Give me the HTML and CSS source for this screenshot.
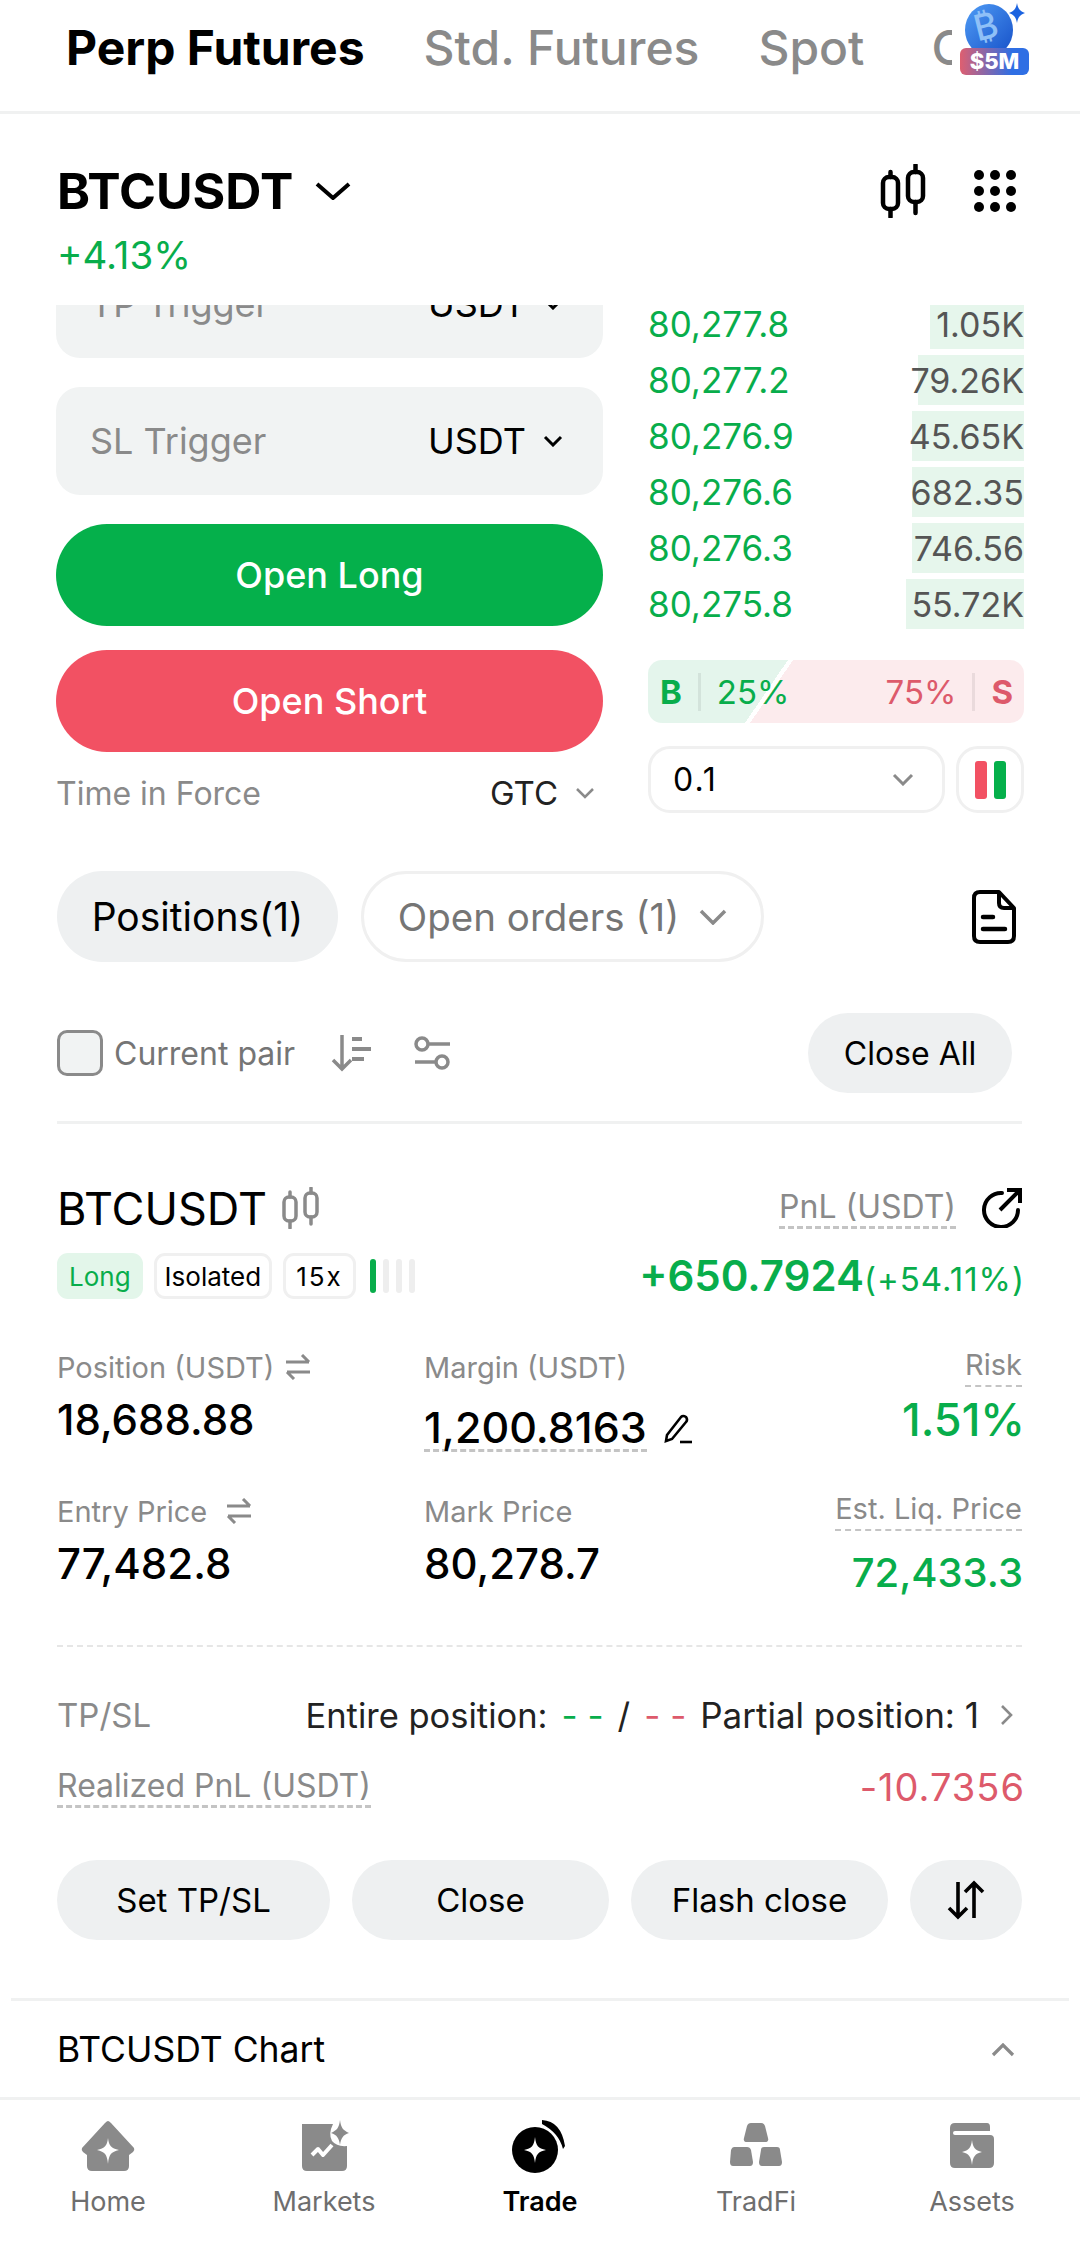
FILE: index.html
```html
<!DOCTYPE html>
<html lang="en">
  <head>
    <meta charset="UTF-8" />
    <meta name="viewport" content="width=device-width, initial-scale=1.0" />
    <title>Trade</title>
    <link rel="stylesheet" href="styles.css">
  </head>
  <body>
    <div class="app">
      <div class="tabs">
        <div class="tabs-list">
          <span class="tab active">Perp Futures</span>
          <span class="tab">Std. Futures</span>
          <span class="tab">Spot</span>
          <span class="tab tab-cut">Copy</span>
        </div>
        <div class="promo">
          <svg class="promo-coin" width="72" height="50" viewBox="0 0 72 50">
            <defs>
              <linearGradient id="coin" x1="0" y1="0" x2="1" y2="1">
                <stop offset="0" stop-color="#4f9cf5" />
                <stop offset="1" stop-color="#1650c8" />
              </linearGradient>
            </defs>
            <ellipse cx="31" cy="30" rx="24" ry="26" fill="url(#coin)" />
            <path d="M59 3 C60 9 62 11 67 13 C62 15 60 17 59 23 C58 17 56 15 51 13 C56 11 58 9 59 3 Z" fill="#1c63e0" />
          </svg>
          <span class="promo-btc">₿</span>
          <span class="promo-label">$5M</span>
        </div>
      </div>

      <div class="symbol">
        <div class="symbol-top">
          <span class="symbol-name">BTCUSDT</span>
          <svg class="symbol-caret" width="36" height="18" viewBox="0 0 36 18"><path d="M2 2 L18 16 L34 2" fill="none" stroke="#000" stroke-width="4" /></svg>
          <svg class="symbol-chart" width="46" height="54" viewBox="0 0 46 54">
            <rect x="3" y="13" width="15" height="32" rx="6" fill="none" stroke="#000" stroke-width="4.5" />
            <rect x="28" y="8" width="15" height="30" rx="6" fill="none" stroke="#000" stroke-width="4.5" />
            <path d="M10.5 8 V13 M10.5 45 V53 M35.5 1 V8 M35.5 38 V49" stroke="#000" stroke-width="4.5" stroke-linecap="round" />
          </svg>
          <svg class="symbol-grid" width="44" height="44" viewBox="0 0 44 44" fill="#000">
            <circle cx="6" cy="6" r="5" /><circle cx="22" cy="6" r="5" /><circle cx="38" cy="6" r="5" />
            <circle cx="6" cy="22" r="5" /><circle cx="22" cy="22" r="5" /><circle cx="38" cy="22" r="5" />
            <circle cx="6" cy="38" r="5" /><circle cx="22" cy="38" r="5" /><circle cx="38" cy="38" r="5" />
          </svg>
        </div>
        <div class="symbol-change">+4.13%</div>
      </div>

      <div class="scroll">
        <div class="trade">
          <div class="form">
            <div class="field field-clipped">
              <span class="field-label">TP Trigger</span>
              <span class="field-unit">USDT <svg width="20" height="12" viewBox="0 0 20 12"><path d="M2 2 L10 10 L18 2" fill="none" stroke="#000" stroke-width="3" /></svg></span>
            </div>
            <div class="field">
              <span class="field-label">SL Trigger</span>
              <span class="field-unit">USDT <svg width="20" height="12" viewBox="0 0 20 12"><path d="M2 2 L10 10 L18 2" fill="none" stroke="#000" stroke-width="3" /></svg></span>
            </div>
            <div class="btn-open long">Open Long</div>
            <div class="btn-open short">Open Short</div>
            <div class="tif">
              <span class="tif-label">Time in Force</span>
              <span class="tif-value">GTC <svg width="20" height="12" viewBox="0 0 20 12"><path d="M2 2 L10 10 L18 2" fill="none" stroke="#8a8a8a" stroke-width="2.5" /></svg></span>
            </div>
          </div>

          <div class="book">
            <div class="book-rows">
              <div class="book-row"><span class="price">80,277.8</span><span class="size" style="width: 94px">1.05K</span></div>
              <div class="book-row"><span class="price">80,277.2</span><span class="size" style="width: 106px">79.26K</span></div>
              <div class="book-row"><span class="price">80,276.9</span><span class="size" style="width: 112px">45.65K</span></div>
              <div class="book-row"><span class="price">80,276.6</span><span class="size" style="width: 112px">682.35</span></div>
              <div class="book-row"><span class="price">80,276.3</span><span class="size" style="width: 112px">746.56</span></div>
              <div class="book-row"><span class="price">80,275.8</span><span class="size" style="width: 118px">55.72K</span></div>
            </div>
            <div class="ratio">
              <b class="green">B</b><i class="ratio-sep"></i><span class="green">25%</span>
              <span class="red ratio-sell">75%</span><i class="ratio-sep"></i><b class="red">S</b>
            </div>
            <div class="book-tools">
              <div class="depth">
                <span>0.1</span>
                <svg width="22" height="13" viewBox="0 0 22 13"><path d="M2 2 L11 11 L20 2" fill="none" stroke="#8a8a8a" stroke-width="3" /></svg>
              </div>
              <div class="layout-btn"><i class="bar-red"></i><i class="bar-green"></i></div>
            </div>
          </div>
        </div>

        <div class="pos-tabs">
          <span class="pill pill-active">Positions(1)</span>
          <span class="pill pill-line">Open orders (1)
            <svg width="28" height="16" viewBox="0 0 28 16"><path d="M2 2 L14 14 L26 2" fill="none" stroke="#8a8a8a" stroke-width="3.5" /></svg>
          </span>
          <svg class="doc-icon" width="44" height="54" viewBox="0 0 44 54">
            <path d="M8 2 H27 L42 18 V46 Q42 52 36 52 H8 Q2 52 2 46 V8 Q2 2 8 2 Z M27 2 V13 Q27 18 32 18 H42" fill="none" stroke="#000" stroke-width="4" stroke-linejoin="round" />
            <path d="M11 27 H21 M11 39 H33" stroke="#000" stroke-width="4.5" stroke-linecap="round" />
          </svg>
        </div>

        <div class="filters">
          <i class="check"></i>
          <span class="check-label">Current pair</span>
          <svg class="sort-icon" width="42" height="38" viewBox="0 0 42 38">
            <path d="M11 1 V35 M2 26 L11 35 L20 26" fill="none" stroke="#8a8a8a" stroke-width="3.5" />
            <path d="M21 5 H31 M21 15 H40 M21 25 H33" stroke="#8a8a8a" stroke-width="4" />
          </svg>
          <svg class="slider-icon" width="36" height="34" viewBox="0 0 36 34">
            <circle cx="8" cy="8" r="6" fill="none" stroke="#8a8a8a" stroke-width="3.5" />
            <circle cx="28" cy="26" r="6" fill="none" stroke="#8a8a8a" stroke-width="3.5" />
            <path d="M14 8 H36 M1 26 H22" stroke="#8a8a8a" stroke-width="3.5" />
          </svg>
          <span class="close-all">Close All</span>
        </div>

        <div class="card">
          <div class="card-head">
            <div class="card-left">
              <div class="card-title">
                <span>BTCUSDT</span>
                <svg width="37" height="42" viewBox="0 0 37 42">
                  <rect x="2" y="10" width="12" height="24" rx="5" fill="none" stroke="#8a8a8a" stroke-width="3.5" />
                  <rect x="23" y="6" width="12" height="24" rx="5" fill="none" stroke="#8a8a8a" stroke-width="3.5" />
                  <path d="M8 5 V10 M8 34 V41 M29 1 V6 M29 30 V37" stroke="#8a8a8a" stroke-width="3.5" stroke-linecap="round" />
                </svg>
              </div>
              <div class="tags">
                <span class="tag tag-long">Long</span>
                <span class="tag tag-margin">Isolated</span>
                <span class="tag tag-lev">15x</span>
                <span class="lev"><i class="on"></i><i></i><i></i><i></i></span>
              </div>
            </div>
            <div class="card-right">
              <div class="pnl-head">
                <span class="dashed">PnL (USDT)</span>
                <svg width="40" height="40" viewBox="0 0 40 40">
                  <path d="M20 5 A17 17 0 1 0 36 22" fill="none" stroke="#000" stroke-width="4" stroke-linecap="round" />
                  <path d="M18 22 L37 3 M25 2 H38 V15" fill="none" stroke="#000" stroke-width="4" />
                </svg>
              </div>
              <div class="pnl-value"><span class="pnl-main">+650.7924</span><span class="pnl-pct">(+54.11%)</span></div>
            </div>
          </div>

          <div class="stats">
            <div class="stat">
              <div class="stat-label">Position (USDT)
                <svg width="28" height="26" viewBox="0 0 28 26"><path d="M2 8 H25 M18 1 L25 8 M26 18 H3 M10 25 L3 18" fill="none" stroke="#8a8a8a" stroke-width="3" /></svg>
              </div>
              <div class="stat-value">18,688.88</div>
            </div>
            <div class="stat">
              <div class="stat-label">Margin (USDT)</div>
              <div class="stat-value margin"><span class="dashed">1,200.8163</span>
                <svg width="30" height="30" viewBox="0 0 30 30"><path d="M4 21 L18 3 Q20 1 23 3 Q25 6 23 8 L9 25 L3 27 Z" fill="none" stroke="#000" stroke-width="2.6" /><path d="M17 28 H29" stroke="#000" stroke-width="2.6" /></svg>
              </div>
            </div>
            <div class="stat stat-end">
              <div class="stat-label"><span class="dashed-thin">Risk</span></div>
              <div class="stat-value green risk">1.51%</div>
            </div>
            <div class="stat">
              <div class="stat-label">Entry Price
                <svg class="swap-gap" width="28" height="26" viewBox="0 0 28 26"><path d="M2 8 H25 M18 1 L25 8 M26 18 H3 M10 25 L3 18" fill="none" stroke="#8a8a8a" stroke-width="3" /></svg>
              </div>
              <div class="stat-value">77,482.8</div>
            </div>
            <div class="stat">
              <div class="stat-label">Mark Price</div>
              <div class="stat-value">80,278.7</div>
            </div>
            <div class="stat stat-end">
              <div class="stat-label"><span class="dashed-thin">Est. Liq. Price</span></div>
              <div class="stat-value green liq">72,433.3</div>
            </div>
          </div>

          <div class="rule-dashed"></div>

          <div class="line tpsl">
            <span class="line-label">TP/SL</span>
            <span class="tpsl-value">
              <span class="tpsl-entire">Entire position:</span>
              <em class="green">- -</em>
              <span>/</span>
              <em class="red">- -</em>
              <span>Partial position: 1</span>
              <svg width="14" height="22" viewBox="0 0 14 22"><path d="M2 2 L11 11 L2 20" fill="none" stroke="#8a8a8a" stroke-width="2.6" /></svg>
            </span>
          </div>
          <div class="line realized">
            <span class="line-label dashed">Realized PnL (USDT)</span>
            <span class="red realized-value">-10.7356</span>
          </div>

          <div class="actions">
            <span class="action a-tpsl">Set TP/SL</span>
            <span class="action a-close">Close</span>
            <span class="action a-flash">Flash close</span>
            <span class="action a-rev">
              <svg width="38" height="40" viewBox="0 0 38 40"><path d="M11 2 V37 M2 28 L11 37 L20 28 M27 38 V3 M18 12 L27 3 L36 12" fill="none" stroke="#000" stroke-width="3.6" /></svg>
            </span>
          </div>
        </div>

        <div class="chart-row">
          <span>BTCUSDT Chart</span>
          <svg width="24" height="14" viewBox="0 0 24 14"><path d="M2 12 L12 2 L22 12" fill="none" stroke="#8a8a8a" stroke-width="3.2" /></svg>
        </div>
      </div>

      <div class="nav">
        <div class="nav-item">
          <svg width="56" height="52" viewBox="0 0 56 52">
            <path d="M28 1 Q29 1 31 3 L54 28 Q55 30 53 32 L49 35 V46 Q49 51 44 51 H12 Q7 51 7 46 V35 L3 32 Q1 30 2 28 L25 3 Q27 1 28 1 Z" fill="#8a8a8a" />
            <path d="M28 18 C29 26 31 28 39 30 C31 32 29 34 28 44 C27 34 25 32 17 30 C25 28 27 26 28 18 Z" fill="#fff" />
          </svg>
          <span>Home</span>
        </div>
        <div class="nav-item">
          <svg class="nav-markets" width="56" height="52" viewBox="0 0 56 52">
            <path d="M7 4 H38 Q33 14 37 21 Q42 27 52 26 V46 Q52 51 47 51 H12 Q7 51 7 46 Z" fill="#8a8a8a" />
            <path d="M45 0 C46 8 48 10 54 13 C48 15 46 18 45 25 C44 18 42 15 36 13 C42 10 44 8 45 0 Z" fill="#8a8a8a" />
            <path d="M17 35 L23 29 L28 35 L37 25" fill="none" stroke="#fff" stroke-width="4" stroke-linejoin="round" />
          </svg>
          <span>Markets</span>
        </div>
        <div class="nav-item nav-active">
          <svg width="56" height="54" viewBox="0 0 56 54">
            <circle cx="23" cy="31" r="23" fill="#000" />
            <path d="M30 1 Q49 2 53 27 L51 30 Q47 14 30 5 Z" fill="#000" />
            <path d="M23 18 C24 27 26 29 34 31 C26 33 24 35 23 44 C22 35 20 33 12 31 C20 29 22 27 23 18 Z" fill="#fff" />
          </svg>
          <span>Trade</span>
        </div>
        <div class="nav-item">
          <svg width="56" height="48" viewBox="0 0 56 48">
            <path d="M23 1 H33 Q36 1 37 4 L40 16 Q41 20 37 20 H19 Q15 20 16 16 L19 4 Q20 1 23 1 Z" fill="#8a8a8a" />
            <path d="M6 25 H19 Q22 25 23 28 L25 40 Q25 44 22 44 H5 Q2 44 2 40 L3 28 Q4 25 6 25 Z" fill="#8a8a8a" />
            <path d="M36 25 H49 Q52 25 52 28 L54 40 Q54 44 51 44 H34 Q31 44 31 40 L33 28 Q33 25 36 25 Z" fill="#8a8a8a" />
          </svg>
          <span>TradFi</span>
        </div>
        <div class="nav-item">
          <svg width="46" height="46" viewBox="0 0 46 46">
            <path d="M6 0 H38 Q41 0 41 4 V8 H6 Q4 8 4 10 Q4 12 6 12 H41 Q45 12 45 16 V40 Q45 45 40 45 H6 Q1 45 1 40 V5 Q1 0 6 0 Z" fill="#8a8a8a" />
            <path d="M23 17 C24 25 26 27 33 29 C26 31 24 33 23 42 C22 33 20 31 13 29 C20 27 22 25 23 17 Z" fill="#fff" />
          </svg>
          <span>Assets</span>
        </div>
      </div>
    </div>
  </body>
</html>
```

FILE: styles.css
```css
* {
  box-sizing: border-box;
}

body {
  margin: 0;
  font-family: Inter, "Liberation Sans", sans-serif;
  color: #000;
  background: #fff;
}

i,
em {
  font-style: normal;
}

.app {
  width: 1080px;
  height: 2246px;
  display: flex;
  flex-direction: column;
  overflow: hidden;
}

.green {
  color: #08ad4b;
}

.red {
  color: #dd5a6b;
}

/* top tabs */
.tabs {
  height: 114px;
  flex: none;
  display: flex;
  padding-left: 66px;
  border-bottom: 3px solid #f0f1f1;
}

.tabs-list {
  width: 886px;
  height: 94px;
  display: flex;
  align-items: center;
  gap: 59px;
  overflow: hidden;
  white-space: nowrap;
}

.tab {
  font-size: 48px;
  font-weight: 500;
  color: #8a8a8a;
}

.tab.active {
  font-weight: 700;
  color: #000;
}

.tab-cut {
  margin-left: 8px;
}

.promo {
  width: 72px;
  height: 80px;
  margin-left: 6px;
  position: relative;
}

.promo-coin {
  display: block;
}

.promo-btc {
  position: absolute;
  top: 4px;
  left: 16px;
  font-size: 36px;
  font-weight: 500;
  line-height: 44px;
  color: #8fc0f7;
  transform: rotate(-14deg);
}

.promo-label {
  position: absolute;
  top: 48px;
  left: 2px;
  width: 69px;
  height: 27px;
  border-radius: 6px;
  background: linear-gradient(90deg, #de5f70, #2f6fe4 75%);
  color: #fff;
  font-size: 22px;
  font-weight: 800;
  line-height: 27px;
  text-align: center;
}

/* symbol header */
.symbol {
  height: 191px;
  flex: none;
  padding: 50px 56px 0 57px;
}

.symbol-top {
  height: 54px;
  display: flex;
  align-items: center;
}

.symbol-name {
  font-size: 50px;
  font-weight: 700;
}

.symbol-caret {
  margin-left: 22px;
}

.symbol-chart {
  margin-left: auto;
}

.symbol-grid {
  margin-left: 47px;
  margin-right: 7px;
}

.symbol-change {
  margin-top: 15px;
  font-size: 38.5px;
  line-height: 44px;
  color: #08ad4b;
}

/* scrolling area */
.scroll {
  flex: 1;
  min-height: 0;
  overflow: hidden;
}

.trade {
  display: flex;
  gap: 45px;
  padding-left: 56px;
  height: 508px;
}

.form {
  width: 547px;
  flex: none;
  margin-top: -55px;
  display: flex;
  flex-direction: column;
}

.field {
  height: 108px;
  flex: none;
  margin-bottom: 29px;
  padding: 0 40px 0 34px;
  border-radius: 24px;
  background: #f1f3f3;
  display: flex;
  align-items: center;
  justify-content: space-between;
}

.field-label {
  font-size: 36px;
  color: #8a8a8a;
}

.field-unit {
  font-size: 36px;
  display: flex;
  align-items: center;
  gap: 17px;
}

.btn-open {
  height: 102px;
  flex: none;
  border-radius: 51px;
  color: #fff;
  font-size: 36px;
  font-weight: 500;
  display: flex;
  align-items: center;
  justify-content: center;
}

.btn-open.long {
  background: #05b04b;
  margin-bottom: 24px;
}

.btn-open.short {
  background: #f25163;
}

.tif {
  margin-top: 21px;
  height: 40px;
  display: flex;
  align-items: center;
  justify-content: space-between;
  padding-right: 8px;
}

.tif-label {
  font-size: 32px;
  color: #8a8a8a;
}

.tif-value {
  font-size: 33px;
  display: flex;
  align-items: center;
  gap: 17px;
  color: #222;
}

/* order book */
.book {
  width: 376px;
  flex: none;
}

.book-rows {
  margin-top: -6px;
  display: flex;
  flex-direction: column;
  gap: 6px;
}

.book-row {
  height: 50px;
  display: flex;
  justify-content: space-between;
  align-items: center;
  font-size: 35px;
}

.price {
  color: #08ad4b;
}

.size {
  height: 50px;
  display: flex;
  align-items: center;
  justify-content: flex-end;
  white-space: nowrap;
  background: #e6f6ec;
  color: #555;
  font-size: 34px;
}

.ratio {
  margin-top: 31px;
  height: 63px;
  padding: 0 11px 0 12px;
  border-radius: 14px;
  background: linear-gradient(124.3deg, #e4f5ec 115.6px, #fff 115.6px, #fff 119.8px, #fcebed 119.8px);
  display: flex;
  align-items: center;
  gap: 16px;
  font-size: 33px;
}

.ratio-sell {
  margin-left: auto;
}

.ratio-sep {
  width: 3px;
  height: 38px;
  background: rgba(0, 0, 0, 0.07);
}

.book-tools {
  margin-top: 23px;
  display: flex;
  justify-content: space-between;
}

.depth {
  width: 297px;
  height: 67px;
  padding: 0 28px 0 22px;
  border: 3px solid #f0f0f0;
  border-radius: 22px;
  display: flex;
  align-items: center;
  justify-content: space-between;
  font-size: 32px;
  letter-spacing: 2px;
}

.layout-btn {
  width: 68px;
  height: 67px;
  border: 3px solid #f0f0f0;
  border-radius: 22px;
  display: flex;
  align-items: center;
  justify-content: center;
  gap: 7px;
}

.bar-red,
.bar-green {
  width: 12px;
  height: 38px;
  border-radius: 3px;
}

.bar-red {
  background: #f25163;
}

.bar-green {
  background: #05b04b;
}

/* positions */
.pos-tabs {
  margin-top: 58px;
  height: 91px;
  padding: 0 64px 0 57px;
  display: flex;
  align-items: center;
  gap: 23px;
}

.pill {
  height: 91px;
  border-radius: 46px;
  font-size: 38.5px;
  display: flex;
  align-items: center;
  white-space: nowrap;
}

.pill-active {
  width: 281px;
  justify-content: center;
  background: #eef0f1;
  font-size: 39px;
}

.pill-line {
  width: 403px;
  justify-content: center;
  gap: 20px;
  border: 3px solid #f0f0f0;
  color: #757575;
}

.doc-icon {
  margin-left: auto;
}

.filters {
  margin-top: 51px;
  height: 80px;
  padding: 0 68px 0 57px;
  display: flex;
  align-items: center;
}

.check {
  width: 46px;
  height: 46px;
  border: 3px solid #8a8a8a;
  border-radius: 10px;
  background: #f1f3f3;
}

.check-label {
  margin-left: 11px;
  font-size: 32px;
  color: #757575;
}

.sort-icon {
  margin-left: 36px;
}

.slider-icon {
  margin-left: 41px;
}

.close-all {
  margin-left: auto;
  width: 204px;
  height: 80px;
  border-radius: 40px;
  background: #eef0f1;
  font-size: 32px;
  display: flex;
  align-items: center;
  justify-content: center;
}

.card {
  margin: 28px 58px 0 57px;
  padding-top: 60px;
  border-top: 3px solid #f0f1f1;
}

.card-head {
  display: flex;
  justify-content: space-between;
}

.card-title {
  display: flex;
  align-items: center;
  gap: 15px;
  height: 48px;
  font-size: 45px;
}

.tags {
  margin-top: 21px;
  height: 46px;
  display: flex;
  align-items: center;
  gap: 11px;
}

.tag {
  height: 46px;
  border: 3px solid #f0f0f0;
  border-radius: 11px;
  font-size: 26px;
  display: flex;
  align-items: center;
}

.tag-long {
  border: none;
  padding: 0 12px;
  background: #e3f6ea;
  color: #08ad4b;
}

.tag-margin {
  padding: 0 8px;
}

.tag-lev {
  padding: 0 10px;
  letter-spacing: 2px;
}

.lev {
  margin-left: 3px;
  display: flex;
  gap: 7px;
}

.lev i {
  width: 6px;
  height: 34px;
  border-radius: 3px;
  background: #eeeeee;
}

.lev i.on {
  background: #08ad4b;
}

.card-right {
  display: flex;
  flex-direction: column;
  align-items: flex-end;
}

.pnl-head {
  display: flex;
  align-items: center;
  gap: 26px;
  height: 48px;
  font-size: 32px;
  color: #8a8a8a;
}

.dashed {
  border-bottom: 3px dashed #c4c4c4;
}

.dashed-thin {
  padding-bottom: 3px;
  border-bottom: 2px dashed #c4c4c4;
}

.pnl-value {
  margin-top: 18px;
  margin-right: -3px;
  display: flex;
  align-items: baseline;
  color: #08ad4b;
}

.pnl-main {
  font-size: 42px;
  font-weight: 600;
}

.pnl-pct {
  font-size: 33px;
  letter-spacing: 1px;
}

.stats {
  margin-top: 46px;
  display: grid;
  grid-template-columns: 367px 1fr auto;
  row-gap: 39px;
}

.stat-label {
  height: 40px;
  font-size: 29px;
  color: #8a8a8a;
  display: flex;
  align-items: center;
  gap: 10px;
}

.swap-gap {
  margin-left: 8px;
}

.stat-value {
  margin-top: 9px;
  font-size: 42px;
  font-weight: 500;
  line-height: 48px;
}

.stat-end {
  display: flex;
  flex-direction: column;
  align-items: flex-end;
}

.margin {
  display: flex;
  align-items: center;
  gap: 16px;
  margin-top: 18px;
  font-size: 43px;
}

.margin .dashed {
  line-height: 44px;
}

.risk {
  margin-right: -3px;
  font-size: 45px;
}

.liq {
  margin-top: 18px;
  margin-right: -1px;
  font-size: 40px;
}

.rule-dashed {
  margin-top: 48px;
  border-top: 2px dashed #e6e6e6;
}

.line {
  display: flex;
  justify-content: space-between;
  align-items: center;
  font-size: 33px;
}

.tpsl {
  margin-top: 48px;
  height: 40px;
}

.tpsl-value {
  display: flex;
  align-items: center;
  gap: 14px;
  font-size: 35px;
  white-space: nowrap;
  color: #222;
}

.tpsl-entire {
  font-size: 34.5px;
}

.tpsl-value svg {
  margin-left: 7px;
  margin-right: 8px;
}

.line-label {
  color: #8a8a8a;
}

.realized {
  margin-top: 32px;
  height: 40px;
}

.realized .line-label {
  font-size: 32px;
}

.realized-value {
  margin-right: -3px;
  font-size: 38px;
  letter-spacing: 1px;
}

.actions {
  margin-top: 53px;
  display: flex;
  gap: 22px;
}

.action {
  height: 80px;
  border-radius: 40px;
  background: #eef0f1;
  font-size: 33px;
  display: flex;
  align-items: center;
  justify-content: center;
}

.a-tpsl {
  width: 273px;
}

.a-close,
.a-flash {
  width: 257px;
}

.a-rev {
  width: 112px;
}

.chart-row {
  margin: 58px 11px 0;
  height: 100px;
  padding: 0 54px 0 46px;
  border-top: 3px solid #f0f1f1;
  display: flex;
  align-items: center;
  justify-content: space-between;
  font-size: 35.5px;
}

/* bottom nav */
.nav {
  height: 149px;
  flex: none;
  border-top: 3px solid #f0f1f1;
  display: grid;
  grid-template-columns: repeat(5, 1fr);
}

.nav-item {
  display: flex;
  flex-direction: column;
  align-items: center;
  padding-top: 18px;
  font-size: 27px;
  color: #6e6e6e;
}

.nav-item svg {
  height: 56px;
}

.nav-item .nav-markets {
  margin-left: -3px;
}

.nav-item span {
  margin-top: 10px;
  line-height: 36px;
}

.nav-active {
  color: #000;
  font-weight: 600;
}
```
